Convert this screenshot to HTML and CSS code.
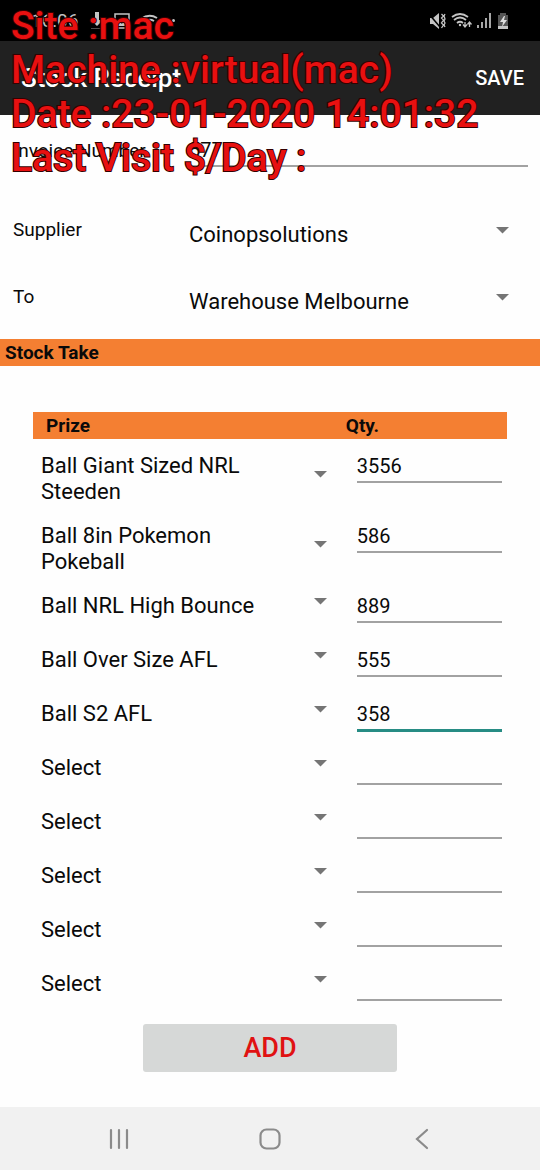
FILE: index.html
```html
<!DOCTYPE html>
<html lang="en">
<head>
<meta charset="utf-8">
<meta name="viewport" content="width=device-width, initial-scale=1">
<title>Stock Receipt</title>
<link rel="stylesheet" href="styles.css">
</head>
<body>
<header class="status-bar">
  <div class="status-left">
    <span class="clock">16:06</span>
    <svg width="14" height="18" viewBox="0 0 14 18" fill="currentColor"><path d="M5 0h4v8h4l-6 6-6-6h4z"/><path d="M1 16h12v1H1z" opacity=".4"/></svg>
    <svg width="16" height="16" viewBox="0 0 16 16"><rect x="1" y="1" width="14" height="14" fill="none" stroke="currentColor" stroke-width="1.5"/><path d="M3 13l3-4 2 2 2-4 4 6z" fill="currentColor"/></svg>
    <svg width="18" height="14" viewBox="0 0 18 14" fill="none" stroke="currentColor" stroke-width="2"><path d="M1 5q8-6 16-1M4 8q5-4 10-1M7 11q2-2 4 0"/></svg>
    <span class="more-dot"></span>
  </div>
  <div class="status-right">
    <svg width="17" height="16" viewBox="0 0 17 16"><path d="M1 5h3l6-5v16l-6-5H1z" fill="currentColor"/><path d="M0 1l11 13" stroke="#000" stroke-width="1.5"/><path d="M12.500 1l2 2-2 2 2 2-2 3 2 2-2 3M16 1l-1 2 1 3-1 2 1 2-1 2 1 2" fill="none" stroke="currentColor" stroke-width="1.300"/></svg>
    <svg width="21" height="16" viewBox="0 0 21 16" fill="none" stroke="currentColor" stroke-width="1.8"><path d="M1 4q8-6 16 0M3 7q6-5 12 0M6 10q3-2.500 6 0"/><circle cx="9" cy="12" r="1.200" fill="currentColor" stroke="none"/><path d="M14 9v5M12 11.500l2 2.500 2-2.500M18.500 14V9M16.500 11.500l2-2.500 2 2.500" stroke-width="1.300"/></svg>
    <svg width="15" height="16" viewBox="0 0 15 16" stroke="currentColor" stroke-width="1.7"><path d="M1 12v3M5 9v6M9 5v10M13 0v15"/></svg>
    <svg width="12" height="16" viewBox="0 0 12 16"><path d="M3 0h6v2h2v14H1V2h2z" fill="#555"/><path d="M1 13h10v3H1z" fill="currentColor"/><path d="M7 3L3 9h3l-1 5 5-7H7l1-4z" fill="#ddd"/></svg>
  </div>
</header>

<div class="app-bar">
  <h1 class="title">Stock Receipt</h1>
  <button class="save" type="button">SAVE</button>
</div>

<aside class="site-info">
  <div>Site :mac</div>
  <div>Machine :virtual(mac)</div>
  <div>Date :23-01-2020 14:01:32</div>
  <div>Last Visit $/Day :</div>
</aside>

<main class="content">
  <form>
    <div class="field invoice">
      <label for="invoice">Invoice Number</label>
      <input class="line-input" id="invoice" type="text" value="5777">
    </div>
    <div class="field supplier">
      <label for="supplier">Supplier</label>
      <select class="spinner" id="supplier"><option>Coinopsolutions</option></select>
    </div>
    <div class="field to">
      <label for="to">To</label>
      <select class="spinner" id="to"><option>Warehouse Melbourne</option></select>
    </div>

    <h2 class="section">Stock Take</h2>

    <table class="prizes">
      <thead><tr><th class="prize-col">Prize</th><th>Qty.</th></tr></thead>
      <tbody>
        <tr><td><select class="spinner" aria-label="Prize 1"><option>Ball Giant Sized NRL Steeden</option></select></td><td><input class="line-input" type="text" aria-label="Quantity 1" value="3556"></td></tr>
        <tr><td><select class="spinner" aria-label="Prize 2"><option>Ball 8in Pokemon Pokeball</option></select></td><td><input class="line-input" type="text" aria-label="Quantity 2" value="586"></td></tr>
        <tr><td><select class="spinner" aria-label="Prize 3"><option>Ball NRL High Bounce</option></select></td><td><input class="line-input" type="text" aria-label="Quantity 3" value="889"></td></tr>
        <tr><td><select class="spinner" aria-label="Prize 4"><option>Ball Over Size AFL</option></select></td><td><input class="line-input" type="text" aria-label="Quantity 4" value="555"></td></tr>
        <tr><td><select class="spinner" aria-label="Prize 5"><option>Ball S2 AFL</option></select></td><td><input class="line-input active" type="text" aria-label="Quantity 5" value="358"></td></tr>
        <tr><td><select class="spinner" aria-label="Prize 6"><option>Select</option></select></td><td><input class="line-input" type="text" aria-label="Quantity 6"></td></tr>
        <tr><td><select class="spinner" aria-label="Prize 7"><option>Select</option></select></td><td><input class="line-input" type="text" aria-label="Quantity 7"></td></tr>
        <tr><td><select class="spinner" aria-label="Prize 8"><option>Select</option></select></td><td><input class="line-input" type="text" aria-label="Quantity 8"></td></tr>
        <tr><td><select class="spinner" aria-label="Prize 9"><option>Select</option></select></td><td><input class="line-input" type="text" aria-label="Quantity 9"></td></tr>
        <tr><td><select class="spinner" aria-label="Prize 10"><option>Select</option></select></td><td><input class="line-input" type="text" aria-label="Quantity 10"></td></tr>
      </tbody>
    </table>
    <button class="add" type="button">ADD</button>
  </form>
</main>

<nav class="nav-bar">
  <button type="button" aria-label="Recent apps"><svg width="24" height="24" viewBox="0 0 24 24"><path d="M4 3v18M12 3v18M20 3v18"/></svg></button>
  <button type="button" aria-label="Home"><svg width="24" height="24" viewBox="0 0 24 24"><rect x="2.500" y="2.500" width="19" height="19" rx="6"/></svg></button>
  <button type="button" aria-label="Back"><svg width="24" height="24" viewBox="0 0 24 24"><path d="M18 3L8 12l10 9"/></svg></button>
</nav>
</body>
</html>
```

FILE: styles.css
```css
* { box-sizing: border-box; }

body {
  margin: 0;
  min-height: 100vh;
  display: flex;
  flex-direction: column;
  position: relative;
  background: #fefefe;
  color: #0a0a0a;
  font-family: Roboto, "Liberation Sans", sans-serif;
  font-size: 19px;
}

button, input, select { font: inherit; color: inherit; border: 0; margin: 0; }

.status-bar {
  display: flex;
  justify-content: space-between;
  align-items: center;
  height: 41px;
  padding: 0 31px;
  background: #000;
  color: #c4c4c4;
}

.status-left, .status-right { display: flex; align-items: center; }
.status-left { gap: 10px; }
.status-right { gap: 5px; }
.clock { font-size: 19px; margin-right: 2px; }
.more-dot { width: 3px; height: 3px; border-radius: 50%; background: currentColor; margin-left: 4px; }

.app-bar {
  display: flex;
  justify-content: space-between;
  align-items: center;
  height: 74px;
  padding: 0 16px 0 21px;
  background: #212121;
  color: #fff;
}

.title { margin: 0; font-size: 26px; font-weight: 500; }
.save { background: none; padding: 0; font-size: 20px; font-weight: 500; }

.site-info {
  position: absolute;
  top: 4px;
  left: 11px;
  z-index: 2;
  color: #e81010;
  font-size: 39px;
  font-weight: 500;
  line-height: 44px;
  white-space: nowrap;
  -webkit-text-stroke: 2px #300;
  paint-order: stroke fill;
  pointer-events: none;
}

.content { flex: 1; }

.field {
  display: grid;
  grid-template-columns: 176px 1fr;
  align-items: start;
  padding: 0 12px 0 13px;
}

.field label { line-height: 24px; }
.invoice { padding-top: 24px; }
.supplier { padding-top: 45px; }
.to { padding-top: 31px; }
.supplier label, .to label { padding-top: 6px; }

.line-input {
  display: block;
  width: 100%;
  height: 28px;
  padding: 0 0 4px;
  border-bottom: 2px solid #a2a2a2;
  border-radius: 0;
  background: none;
  outline: none;
  font-size: 20px;
}

.spinner {
  appearance: none;
  display: block;
  width: 100%;
  padding: 10px 50px 0 0;
  border-radius: 0;
  outline: none;
  font-size: 22px;
  line-height: 26px;
  white-space: normal;
  background: url("data:image/svg+xml,%3Csvg xmlns='http://www.w3.org/2000/svg' width='13' height='7'%3E%3Cpath d='M0 0h13L6.500 6.500z' fill='%23757575'/%3E%3C/svg%3E") no-repeat right 19px center;
}

.section {
  margin: 24px 0 46px;
  padding: 0 5px;
  background: #f47f32;
  font-size: 19px;
  line-height: 27px;
  font-weight: 700;
}

.prizes {
  width: calc(100% - 66px);
  margin: 0 33px;
  border-collapse: collapse;
  table-layout: fixed;
}

.prizes th {
  padding: 0;
  background: #f47f32;
  font-size: 19px;
  line-height: 27px;
  text-align: left;
}

.prizes .prize-col { width: 66%; padding-left: 13px; }
.prizes td { height: 54px; padding: 4px 5px 4px 11px; vertical-align: top; }
.prizes td:first-child { padding: 4px 0 4px 8px; }
.prizes .line-input { height: 40px; padding: 8px 0 0; }
.prizes .active { height: 41px; border-bottom: 3px solid #278c84; }

.add {
  display: block;
  width: 47%;
  height: 48px;
  margin: 13px auto 35px;
  border-radius: 3px;
  background: #d6d8d7;
  color: #e01212;
  font-size: 27px;
  font-weight: 500;
}

.nav-bar {
  display: flex;
  justify-content: space-between;
  align-items: center;
  height: 63px;
  padding: 0 107px;
  background: #f1f1f1;
}

.nav-bar button { display: flex; padding: 0; background: none; }
.nav-bar svg { fill: none; stroke: #8b8b8b; stroke-width: 2.2; stroke-linecap: round; }
```
